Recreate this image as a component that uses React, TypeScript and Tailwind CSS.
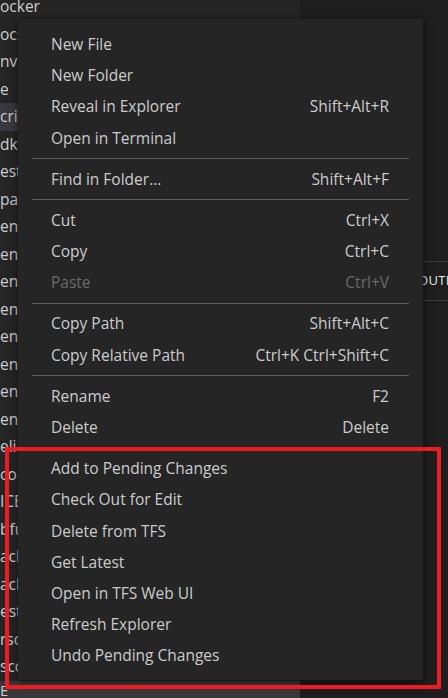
const font = { fontFamily: '"Open Sans", "Noto Sans", sans-serif' };

const tree = [
  "ocker",
  "ocs",
  "nv",
  "e",
  "crip",
  "dk",
  "est",
  "pab",
  "env",
  "env",
  "env",
  "env",
  "env",
  "env",
  "env",
  "env",
  "eli",
  "co",
  "ICE",
  "bfu",
  "ack",
  "ack",
  "est",
  "rsco",
  "sco",
];

type Item = { label: string; keys?: string; disabled?: boolean } | "sep";

const menu: Item[] = [
  { label: "New File" },
  { label: "New Folder" },
  { label: "Reveal in Explorer", keys: "Shift+Alt+R" },
  { label: "Open in Terminal" },
  "sep",
  { label: "Find in Folder...", keys: "Shift+Alt+F" },
  "sep",
  { label: "Cut", keys: "Ctrl+X" },
  { label: "Copy", keys: "Ctrl+C" },
  { label: "Paste", keys: "Ctrl+V", disabled: true },
  "sep",
  { label: "Copy Path", keys: "Shift+Alt+C" },
  { label: "Copy Relative Path", keys: "Ctrl+K Ctrl+Shift+C" },
  "sep",
  { label: "Rename", keys: "F2" },
  { label: "Delete", keys: "Delete" },
  "sep",
  { label: "Add to Pending Changes" },
  { label: "Check Out for Edit" },
  { label: "Delete from TFS" },
  { label: "Get Latest" },
  { label: "Open in TFS Web UI" },
  { label: "Refresh Explorer" },
  { label: "Undo Pending Changes" },
];

export default function App() {
  return (
    <div
      className="relative flex h-[698px] w-[448px] overflow-hidden bg-[#1e1e1e] text-[#cccccc]"
      style={font}
    >
      {/* explorer sidebar */}
      <div className="flex w-[300px] shrink-0 flex-col bg-[#252526]">
        <div className="-mt-[7px] flex flex-col">
          {tree.map((t, i) => (
            <div
              key={i}
              className={`flex h-[27.5px] items-center whitespace-nowrap text-[15.5px] ${
                i === 4 ? "bg-[#37373d]" : ""
              }`}
            >
              {t}
            </div>
          ))}
        </div>
        <div className="mt-auto flex h-[20px] items-center bg-[#383838] text-[15px]">E</div>
      </div>

      {/* editor + panel */}
      <div className="flex flex-1 flex-col">
        <div className="h-[261px]" />
        <div className="flex h-[40px] items-center border-y border-[#3c3c3c] pl-[118px] text-[13px] tracking-wide whitespace-nowrap text-[#e7e7e7]">
          OUTPUT
        </div>
      </div>

      {/* context menu */}
      <div className="absolute top-[19px] left-[18px] flex w-[405px] flex-col bg-[#252526] pt-[10px] pb-[8px] shadow-[0_2px_8px_rgba(0,0,0,0.6)]">
        {menu.map((m, i) =>
          m === "sep" ? (
            <div key={i} className="flex h-[10px] items-center px-[14px]">
              <div className="h-px w-full bg-[#5f5f5f]" />
            </div>
          ) : (
            <div
              key={i}
              className={`flex h-[31.2px] items-center justify-between pr-[34px] pl-[33px] text-[15.5px] ${
                m.disabled ? "text-[#6b6b6b]" : "text-[#cccccc]"
              }`}
            >
              <span>{m.label}</span>
              {m.keys && <span>{m.keys}</span>}
            </div>
          )
        )}
      </div>

      {/* highlight box */}
      <div className="absolute top-[447px] left-[5px] h-[242px] w-[436px] border-4 border-[#ed1c24]" />
    </div>
  );
}
